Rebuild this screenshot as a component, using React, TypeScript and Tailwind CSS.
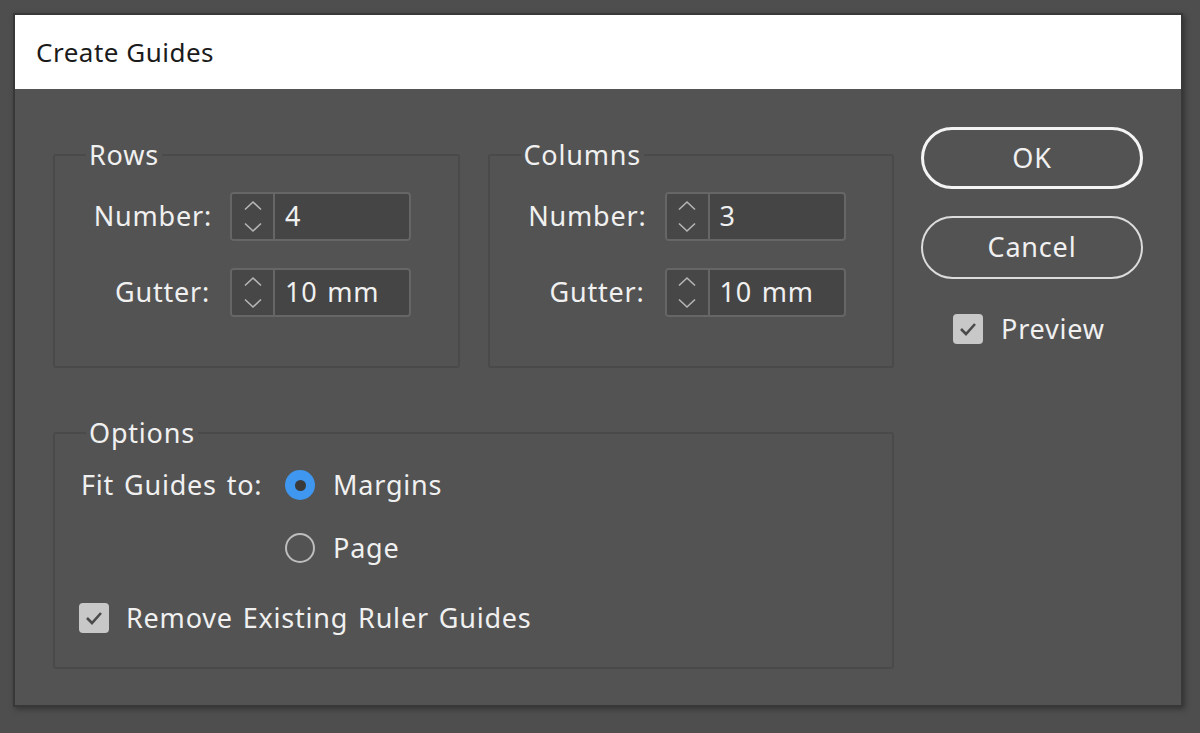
import React from 'react';

const font = { fontFamily: '"Noto Sans", "Open Sans", Arial, sans-serif' };

const txt = 'whitespace-nowrap text-[27px] tracking-[0.8px] [word-spacing:2px] text-[#f0f0f0]';

const Spinner: React.FC<{ value: string }> = ({ value }) => (
  <div className="flex h-[49px] w-[181px] overflow-hidden rounded-[4px] border-2 border-[#666666] bg-[#454545]">
    <div className="flex w-[43px] flex-col items-center justify-between border-r-2 border-[#666666] bg-[#474747] py-[6px]">
      <svg width="20" height="11" viewBox="0 0 20 11" fill="none">
        <path d="M2 9.5 L10 2 L18 9.5" stroke="#b5b5b5" strokeWidth="1.6" />
      </svg>
      <svg width="20" height="11" viewBox="0 0 20 11" fill="none">
        <path d="M2 1.5 L10 9 L18 1.5" stroke="#b5b5b5" strokeWidth="1.6" />
      </svg>
    </div>
    <div className={`flex flex-1 items-center pl-[10px] ${txt}`}>{value}</div>
  </div>
);

const Check: React.FC = () => (
  <div className="flex h-[30px] w-[30px] shrink-0 items-center justify-center rounded-[4px] bg-[#c8c8c8]">
    <svg width="20" height="16" viewBox="0 0 20 16" fill="none">
      <path d="M3 8 L8 13 L17 3" stroke="#4a4a4a" strokeWidth="2.6" />
    </svg>
  </div>
);

const Group: React.FC<{ title: string; a: string; b: string }> = ({ title, a, b }) => (
  <fieldset className="w-[407px] rounded-[3px] border-2 border-[#4a4a4a] pb-[49px] pl-[18px]">
    <legend className={`ml-[13px] px-[3px] leading-[30px] ${txt}`}>{title}</legend>
    <div className="mt-[22px] grid grid-cols-[139px_181px] items-center gap-x-[18px] gap-y-[27px]">
      <div className={`text-right ${txt}`}>Number:</div>
      <Spinner value={a} />
      <div className={`pr-[2px] text-right ${txt}`}>Gutter:</div>
      <Spinner value={b} />
    </div>
  </fieldset>
);

export default function App() {
  return (
    <div className="min-h-[733px] bg-[#4e4e4e] pl-[13px] pt-[13px]" style={font}>
      <div className="flex h-[694px] w-[1170px] flex-col border-2 border-[#383838] bg-[#535353] shadow-[2px_2px_6px_rgba(0,0,0,0.35)]">
        <div className="flex h-[74px] items-center bg-white pl-[21px] text-[26px] tracking-[0.5px] text-[#1b1b1b]">Create Guides</div>
        <div className="flex flex-1 pl-[38px] pt-[51px]">
          <div className="flex w-[841px] flex-col gap-[50px]">
            <div className="flex gap-[28px]">
              <Group title="Rows" a="4" b="10 mm" />
              <Group title="Columns" a="3" b="10 mm" />
            </div>
            <fieldset className="h-[251px] rounded-[3px] border-2 border-[#4a4a4a] pl-[26px]">
              <legend className={`ml-[5px] px-[3px] leading-[30px] ${txt}`}>Options</legend>
              <div className={`mt-[17px] grid grid-cols-[182px_30px_auto] items-center gap-x-[22px] gap-y-[22px] ${txt}`}>
                <div>Fit Guides to:</div>
                <div className="flex h-[30px] w-[30px] items-center justify-center rounded-full bg-[#3f97f0]">
                  <div className="h-[11px] w-[11px] rounded-full bg-[#3a3a3a]" />
                </div>
                <div className="-ml-[4px]">Margins</div>
                <div />
                <div className="h-[30px] w-[30px] rounded-full border-2 border-[#bdbdbd]" />
                <div className="-ml-[4px]">Page</div>
              </div>
              <div className={`-ml-[2px] mt-[30px] flex items-center gap-[17px] ${txt}`}>
                <Check />
                <span>Remove Existing Ruler Guides</span>
              </div>
            </fieldset>
          </div>
          <div className="ml-[27px] flex w-[222px] flex-col items-stretch">
            <button className={`-mt-[13px] h-[62px] rounded-full border-[3px] border-[#f4f4f4] ${txt}`}>OK</button>
            <button className={`mt-[27px] h-[63px] rounded-full border-2 border-[#dcdcdc] ${txt}`}>Cancel</button>
            <div className={`mt-[30px] flex items-center gap-[18px] pl-[32px] ${txt}`}>
              <Check />
              <span>Preview</span>
            </div>
          </div>
        </div>
      </div>
    </div>
  );
}
